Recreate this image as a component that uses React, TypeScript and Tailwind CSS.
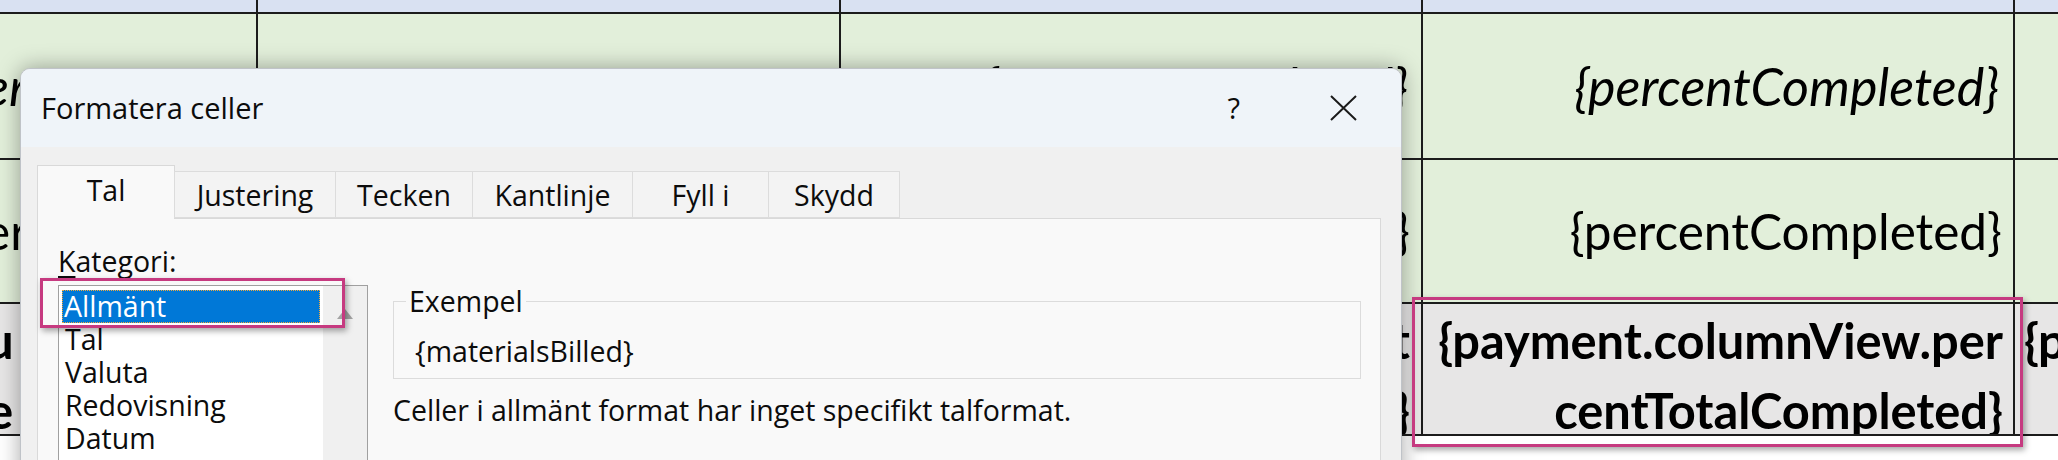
import React from "react";

const tabs = [
  { label: "Tal", width: "w-[138px]", active: true },
  { label: "Justering", width: "w-[162px]" },
  { label: "Tecken", width: "w-[138px]" },
  { label: "Kantlinje", width: "w-[161px]" },
  { label: "Fyll i", width: "w-[137px]" },
  { label: "Skydd", width: "w-[132px]" },
];

const categories = ["Tal", "Valuta", "Redovisning", "Datum", "Tid"];

function SheetGrid() {
  return (
    <div className="grid grid-cols-[256px_581px_580px_590px_1fr] grid-rows-[12px_144px_142px_130px] gap-[2px] bg-[#1c1c1c] pb-[2px] font-['Lato',sans-serif] text-[49.5px] text-black">
      {/* header strip */}
      <div className="bg-[#d9e1f2]" />
      <div className="bg-[#d9e1f2]" />
      <div className="bg-[#d9e1f2]" />
      <div className="bg-[#d9e1f2]" />
      <div className="bg-[#d9e1f2]" />

      {/* row 1 */}
      <div className="flex items-center overflow-hidden bg-[#e2efda] text-[52px] italic">
        <span className="-ml-[16px] whitespace-nowrap">er</span>
      </div>
      <div className="bg-[#e2efda]" />
      <div className="flex items-center justify-end overflow-hidden whitespace-nowrap bg-[#e2efda] pr-[13px] text-[52px] italic">
        {"{percentCompleted}"}
      </div>
      <div className="flex items-center justify-end overflow-hidden whitespace-nowrap bg-[#e2efda] pr-[14px] text-[52px] italic">
        {"{percentCompleted}"}
      </div>
      <div className="bg-[#e2efda]" />

      {/* row 2 */}
      <div className="flex items-center overflow-hidden bg-[#e2efda]">
        <span className="-ml-[16px] whitespace-nowrap">er</span>
      </div>
      <div className="bg-[#e2efda]" />
      <div className="flex items-center justify-end overflow-hidden whitespace-nowrap bg-[#e2efda] pr-[11px]">
        {"{percentCompleted}"}
      </div>
      <div className="flex items-center justify-end overflow-hidden whitespace-nowrap bg-[#e2efda] pr-[11px]">
        {"{percentCompleted}"}
      </div>
      <div className="bg-[#e2efda]" />

      {/* row 3 */}
      <div className="flex flex-col overflow-hidden bg-[#e7e6e6] pt-px text-[49px] font-bold leading-[70px]">
        <span className="-ml-[14px]">u</span>
        <span className="-ml-[13px]">e</span>
      </div>
      <div className="bg-[#e7e6e6]" />
      <div className="flex flex-col items-end overflow-hidden whitespace-nowrap bg-[#e7e6e6] pr-[11px] pt-px text-[49px] font-bold leading-[70px]">
        <span>{"{payment.columnView.amount"}</span>
        <span>{"Completed}"}</span>
      </div>
      <div className="flex flex-col items-end overflow-hidden whitespace-nowrap bg-[#e7e6e6] pr-[10px] pt-px text-[48.8px] font-bold leading-[70px]">
        <span>{"{payment.columnView.per"}</span>
        <span>{"centTotalCompleted}"}</span>
      </div>
      <div className="overflow-hidden whitespace-nowrap bg-[#e7e6e6] pl-[9px] pt-px text-[49px] font-bold leading-[70px]">
        {"{payment.columnView"}
      </div>
    </div>
  );
}

function FormatDialog() {
  return (
    <div className="absolute left-[20px] top-[68px] flex h-[420px] w-[1382px] flex-col overflow-hidden rounded-t-[10px] border border-[#bfc3c8] bg-[#f0f0f0] font-['Open_Sans',sans-serif] text-[#0c0c0c] shadow-[0_0_22px_rgba(0,0,0,0.35)]">
      {/* title bar */}
      <div className="flex h-[78px] shrink-0 items-center bg-[#eff4f9] pl-[20px]">
        <span className="text-[29px]">Formatera celler</span>
        <span className="ml-auto text-[29px]">?</span>
        <svg className="ml-[90px] mr-[44px]" width="27" height="26" viewBox="0 0 27 26">
          <path d="M1 1 L26 25 M26 1 L1 25" stroke="#1b1b1b" strokeWidth="2" fill="none" />
        </svg>
      </div>

      <div className="flex flex-1 flex-col pl-[16px] pr-[20px] pt-[18px] text-[28.5px]">
        {/* tabs */}
        <div className="relative z-10 flex h-[53px] items-end">
          {tabs.map((t) =>
            t.active ? (
              <div
                key={t.label}
                className={`${t.width} -mb-px flex h-[54px] items-center justify-center border border-b-0 border-[#d9d9d9] bg-[#f9f9f9] pb-[4px]`}
              >
                {t.label}
              </div>
            ) : (
              <div
                key={t.label}
                className={`${t.width} -ml-px flex h-[47px] items-center justify-center border border-[#dcdcdc] bg-[#f3f3f3] pt-[2px]`}
              >
                {t.label}
              </div>
            )
          )}
        </div>

        {/* panel */}
        <div className="flex flex-1 border border-[#d9d9d9] bg-[#f9f9f9] pl-[20px] pr-[19px] pt-[25px]">
          <div className="flex w-[310px] shrink-0 flex-col">
            <div className="h-[34px] leading-[34px]">
              <span className="underline underline-offset-4">K</span>ategori:
            </div>
            <div className="mt-[7px] flex h-[200px] border border-[#a0a0a0] bg-white">
              <div className="flex-1 pl-[3px] pr-[3px] pt-[4px]">
                <div className="h-[33px] border border-dotted border-[#f2a93b] bg-[#0078d7] pl-[1px] leading-[31px] text-white">
                  Allmänt
                </div>
                {categories.map((c) => (
                  <div key={c} className="h-[33px] pl-[3px] leading-[33px]">
                    {c}
                  </div>
                ))}
              </div>
              <div className="flex w-[44px] justify-center bg-[#f0f0f0] pt-[23px]">
                <svg width="16" height="10" viewBox="0 0 16 10">
                  <path d="M8 0 L16 10 L0 10 Z" fill="#a3a3a3" />
                </svg>
              </div>
            </div>
          </div>

          <div className="ml-[25px] flex flex-1 flex-col pt-[40px]">
            <fieldset className="border border-[#dcdcdc]">
              <legend className="ml-[12px] px-[3px] leading-[34px]">Exempel</legend>
              <div className="pb-[10px] pl-[21px] pt-[16px] leading-[34px]">{"{materialsBilled}"}</div>
            </fieldset>
            <div className="mt-[14px] leading-[34px]">
              Celler i allmänt format har inget specifikt talformat.
            </div>
          </div>
        </div>
      </div>
    </div>
  );
}

export default function App() {
  return (
    <div className="relative h-[460px] w-[2058px] overflow-hidden bg-white">
      <SheetGrid />
      <FormatDialog />
      <div className="pointer-events-none absolute left-[40px] top-[278px] h-[50px] w-[305px] border-[3px] border-[#c63a80] shadow-[2px_3px_6px_rgba(0,0,0,0.35)]" />
      <div className="pointer-events-none absolute left-[1412px] top-[297px] h-[150px] w-[611px] border-[3px] border-[#c63a80] shadow-[2px_3px_6px_rgba(0,0,0,0.35)]" />
    </div>
  );
}
